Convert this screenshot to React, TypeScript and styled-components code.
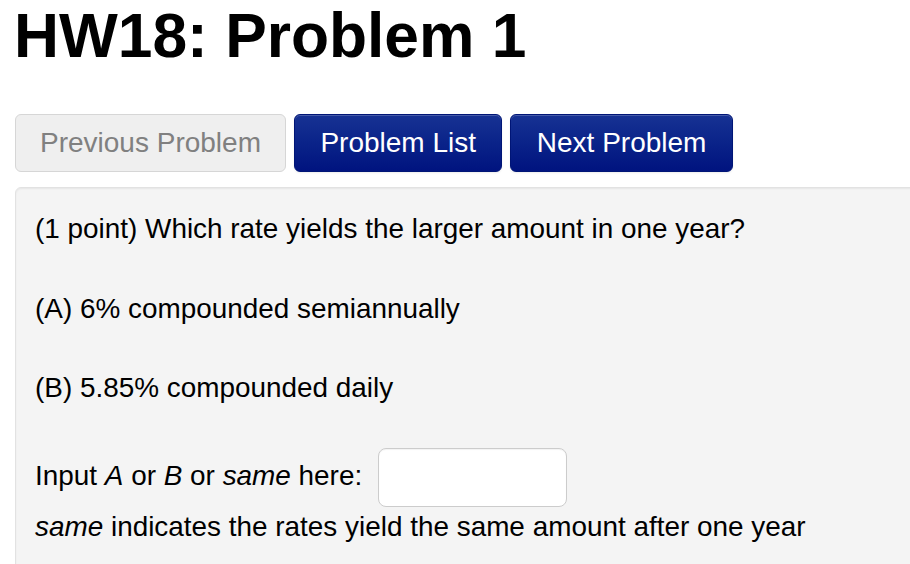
import React from "react";
import styled, { createGlobalStyle } from "styled-components";

const Global = createGlobalStyle`
  html, body {
    margin: 0;
    padding: 0;
    background: #ffffff;
    overflow: hidden;
  }
  body {
    font-family: "Liberation Sans", Arial, Helvetica, sans-serif;
    color: #000;
  }
`;

const Page = styled.div`
  width: 1100px;
  padding: 1px 0 0 15px;
  box-sizing: border-box;
`;

const Title = styled.h1`
  margin: 0 0 0 -1px;
  font-size: 62.3px;
  line-height: 70px;
  font-weight: 700;
  color: #000;
`;

const Toolbar = styled.div`
  display: flex;
  gap: 8px;
  margin-top: 43px;
`;

const NavButton = styled.button<{ $primary?: boolean }>`
  display: inline-flex;
  align-items: center;
  height: 58px;
  padding: ${(p) => (p.$primary ? "0 25.4px" : "0 24px")};
  box-sizing: border-box;
  border-radius: 6px;
  font-family: "Liberation Sans", Arial, Helvetica, sans-serif;
  font-size: 28px;
  cursor: ${(p) => (p.$primary ? "pointer" : "default")};
  color: ${(p) => (p.$primary ? "#ffffff" : "#808080")};
  border: 1px solid ${(p) => (p.$primary ? "#001576" : "#d6d6d6")};
  background: ${(p) =>
    p.$primary
      ? "linear-gradient(to bottom, #173293 0%, #0a2389 50%, #00137f 100%)"
      : "#efefef"};
  box-shadow: ${(p) =>
    p.$primary
      ? "inset 0 1px 0 rgba(255,255,255,0.2), 0 1px 2px rgba(0,0,0,0.08)"
      : "none"};
`;

const Panel = styled.div`
  margin-top: 15px;
  width: 1000px;
  min-height: 420px;
  box-sizing: border-box;
  padding: 21px 19px;
  background: #f4f4f4;
  border: 1px solid #e2e2e2;
  border-radius: 6px;
  box-shadow: inset 0 1px 2px rgba(0, 0, 0, 0.06);
  font-size: 27.9px;
  line-height: 40px;
`;

const Para = styled.p`
  margin: 0 0 39.6px;
`;

const AnswerInput = styled.input`
  width: 189px;
  height: 59px;
  box-sizing: border-box;
  margin: 0 0 0 16px;
  vertical-align: middle;
  border: 1.5px solid #cccccc;
  border-radius: 8px;
  background: #ffffff;
  box-shadow: inset 0 1px 1px rgba(0, 0, 0, 0.05);
  font-size: 27px;
  font-family: "Liberation Sans", Arial, Helvetica, sans-serif;
  padding: 0 10px;
  outline: none;
`;

export default function App() {
  return (
    <>
      <Global />
      <Page>
        <Title>HW18: Problem 1</Title>
        <Toolbar>
          <NavButton disabled>Previous Problem</NavButton>
          <NavButton $primary>Problem List</NavButton>
          <NavButton $primary>Next Problem</NavButton>
        </Toolbar>
        <Panel>
          <Para>(1 point) Which rate yields the larger amount in one year?</Para>
          <Para>(A) 6% compounded semiannually</Para>
          <Para>(B) 5.85% compounded daily</Para>
          <Para>
            Input <i>A</i> or <i>B</i> or <i>same</i> here:
            <AnswerInput type="text" aria-label="answer" />
            <br />
            <i>same</i> indicates the rates yield the same amount after one year
          </Para>
        </Panel>
      </Page>
    </>
  );
}
